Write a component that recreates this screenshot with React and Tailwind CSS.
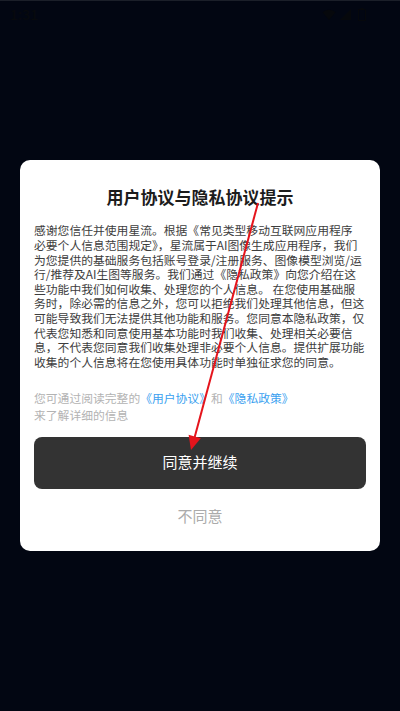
import React from "react";

const bodyLines = [
  "感谢您信任并使用星流。根据《常见类型移动互联网应用程序",
  "必要个人信息范围规定》，星流属于AI图像生成应用程序，我们",
  "为您提供的基础服务包括账号登录/注册服务、图像模型浏览/运",
  "行/推荐及AI生图等服务。我们通过《隐私政策》向您介绍在这",
  "些功能中我们如何收集、处理您的个人信息。 在您使用基础服",
  "务时，除必需的信息之外，您可以拒绝我们处理其他信息，但这",
  "可能导致我们无法提供其他功能和服务。您同意本隐私政策，仅",
  "代表您知悉和同意使用基本功能时我们收集、处理相关必要信",
  "息，不代表您同意我们收集处理非必要个人信息。提供扩展功能",
  "收集的个人信息将在您使用具体功能时单独征求您的同意。",
];

const StatusBar = () => {
  return (
    <div className="absolute top-0 left-0 right-0 h-[28px] border-t border-[#1b1f29] flex items-center justify-between pl-[10px] pr-[34px]">
      <span className="text-[14px] font-medium text-[#07090d]">1:31</span>
      <div className="flex items-center gap-[4px]">
        <svg width="14" height="12" viewBox="0 0 14 12">
          <path d="M7 11 L0.5 3.2 Q7 -1.5 13.5 3.2 Z" fill="#06080c" />
        </svg>
        <svg width="11" height="11" viewBox="0 0 11 11">
          <path d="M11 0 L11 11 L0 11 Z" fill="#06080c" />
        </svg>
        <svg width="8" height="13" viewBox="0 0 8 13" className="ml-[3px]">
          <rect x="2.5" y="0" width="3" height="2" fill="#06080c" />
          <rect x="0.5" y="1.5" width="7" height="11" rx="1" fill="none" stroke="#06080c" strokeWidth="1.2" />
        </svg>
      </div>
    </div>
  );
};

const Arrow = () => {
  return (
    <svg
      className="absolute inset-0 pointer-events-none"
      width="400"
      height="711"
      viewBox="0 0 400 711"
    >
      <line x1="258" y1="203" x2="194.7" y2="437" stroke="#e5141c" strokeWidth="2" />
      <polygon points="191,450 200.8,438.2 188.6,434.8" fill="#e5141c" />
    </svg>
  );
};

const App = () => {
  return (
    <div
      className="relative w-[400px] h-[711px] bg-[#020612] flex items-center justify-center overflow-hidden"
      style={{ fontFamily: '"Noto Sans CJK SC", "Noto Sans", sans-serif' }}
    >
      <StatusBar />
      <div className="w-[360px] bg-white rounded-[10px] px-[14px] pt-[25px] pb-[25px] flex flex-col">
        <h1 className="text-center text-[17px] font-bold leading-[24px] text-[#1c1c1c]">
          用户协议与隐私协议提示
        </h1>
        <div className="mt-[14px] text-[11.8px] leading-[14.6px] text-[#3d3d3d] whitespace-nowrap">
          {bodyLines.map((line, i) => (
            <div key={i}>{line}</div>
          ))}
        </div>
        <div className="mt-[21px] text-[11.8px] leading-[16.6px] text-[#b3b3b3]">
          <div>
            您可通过阅读完整的<span className="text-[#3a9ff0]">《用户协议》</span>和
            <span className="text-[#3a9ff0]">《隐私政策》</span>
          </div>
          <div>来了解详细的信息</div>
        </div>
        <button className="mt-[13px] h-[52px] w-full rounded-[8px] bg-[#333333] text-white text-[15px] flex items-center justify-center">
          同意并继续
        </button>
        <div className="mt-[17px] text-center text-[15px] leading-[20px] text-[#ababab]">
          不同意
        </div>
      </div>
      <Arrow />
    </div>
  );
};

export default App;
